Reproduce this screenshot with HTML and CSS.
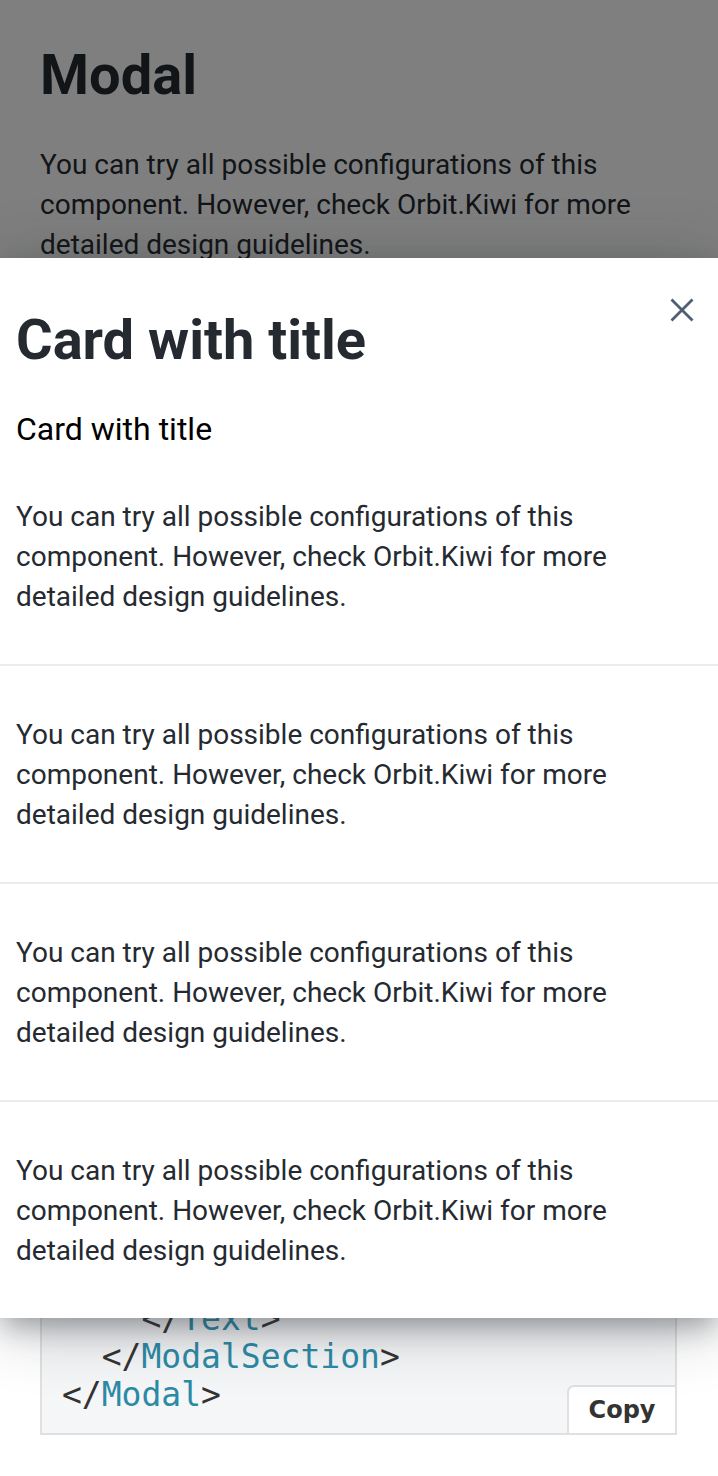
FILE: index.html
```html
<!DOCTYPE html>
<html lang="en">
<head>
<meta charset="utf-8">
<title>Modal</title>
<link rel="stylesheet" href="styles.css">
</head>
<body>
<main class="page">
  <h1 class="page-title">Modal</h1>
  <p class="page-text">You can try all possible configurations of this component. However, check Orbit.Kiwi for more detailed design guidelines.</p>
  <div class="code">
<pre class="code-pre"><span class="p">&lt;</span><span class="t">Modal</span><span class="p">&gt;</span>
  <span class="p">&lt;</span><span class="t">ModalHeader</span> title="Card with title" /<span class="p">&gt;</span>
  <span class="p">&lt;</span><span class="t">ModalSection</span><span class="p">&gt;</span>
    <span class="p">&lt;</span><span class="t">Text</span><span class="p">&gt;</span>
      You can try all possible configurations
    <span class="p">&lt;/</span><span class="t">Text</span><span class="p">&gt;</span>
  <span class="p">&lt;/</span><span class="t">ModalSection</span><span class="p">&gt;</span>
  <span class="p">&lt;</span><span class="t">ModalSection</span><span class="p">&gt;</span>
    <span class="p">&lt;</span><span class="t">Text</span><span class="p">&gt;</span>
      You can try all possible configurations
    <span class="p">&lt;/</span><span class="t">Text</span><span class="p">&gt;</span>
  <span class="p">&lt;/</span><span class="t">ModalSection</span><span class="p">&gt;</span>
  <span class="p">&lt;</span><span class="t">ModalSection</span><span class="p">&gt;</span>
    <span class="p">&lt;</span><span class="t">Text</span><span class="p">&gt;</span>
      You can try all possible configurations
    <span class="p">&lt;/</span><span class="t">Text</span><span class="p">&gt;</span>
  <span class="p">&lt;/</span><span class="t">ModalSection</span><span class="p">&gt;</span>
  <span class="p">&lt;</span><span class="t">ModalSection</span><span class="p">&gt;</span>
    <span class="p">&lt;</span><span class="t">Text</span><span class="p">&gt;</span>
      You can try all possible configurations
    <span class="p">&lt;/</span><span class="t">Text</span><span class="p">&gt;</span>
  <span class="p">&lt;/</span><span class="t">ModalSection</span><span class="p">&gt;</span>
<span class="p">&lt;/</span><span class="t">Modal</span><span class="p">&gt;</span></pre>
    <button class="copy" type="button">Copy</button>
  </div>
</main>

<div class="overlay">
  <section class="modal" role="dialog" aria-label="Card with title">
    <button class="close" type="button" aria-label="Close">
      <svg width="24" height="24" viewBox="0 0 24 24" aria-hidden="true">
        <path d="M1.5 1.5 L22.5 22.5 M22.5 1.5 L1.5 22.5" stroke="#4f5e71" stroke-width="2.8" stroke-linecap="butt" fill="none"/>
      </svg>
    </button>
    <header class="modal-header">
      <h2 class="modal-title">Card with title</h2>
      <p class="modal-desc">Card with title</p>
    </header>
    <div class="modal-section">
      <p class="modal-text">You can try all possible configurations of this component. However, check Orbit.Kiwi for more detailed design guidelines.</p>
    </div>
    <div class="modal-section">
      <p class="modal-text">You can try all possible configurations of this component. However, check Orbit.Kiwi for more detailed design guidelines.</p>
    </div>
    <div class="modal-section">
      <p class="modal-text">You can try all possible configurations of this component. However, check Orbit.Kiwi for more detailed design guidelines.</p>
    </div>
    <div class="modal-section">
      <p class="modal-text">You can try all possible configurations of this component. However, check Orbit.Kiwi for more detailed design guidelines.</p>
    </div>
  </section>
</div>
</body>
</html>
```

FILE: styles.css
```css
html, body {
  margin: 0;
  padding: 0;
  background: #ffffff;
}

body {
  font-family: Roboto, "Liberation Sans", sans-serif;
  color: #252a31;
  position: relative;
  min-height: 1476px;
}

.page {
  padding: 39px 41px 41px 40px;
}

.page-title {
  margin: 0;
  font-size: 56px;
  line-height: 72px;
  font-weight: 700;
  color: #252a31;
}

.page-text {
  margin: 34px 0 0;
  font-size: 28px;
  line-height: 40px;
}

.code {
  position: relative;
  margin-top: 254px;
}

.code-pre {
  margin: 0;
  padding: 19px 20px;
  border: 2px solid #e0e0e0;
  background: #f5f6f7;
  font-family: "DejaVu Sans Mono", "Liberation Mono", monospace;
  font-size: 33px;
  line-height: 38px;
  color: #333333;
  white-space: pre;
  overflow: hidden;
}

.code-pre .p {
  color: #333333;
}

.code-pre .t {
  color: #2c8aa6;
}

.copy {
  position: absolute;
  right: 0;
  bottom: 0;
  width: 110px;
  height: 50px;
  padding: 0;
  background: #ffffff;
  border: 2px solid #e0e0e0;
  border-top-left-radius: 7px;
  font-family: "DejaVu Sans", "Liberation Sans", sans-serif;
  font-weight: 700;
  font-size: 24px;
  color: #333333;
}

.overlay {
  position: absolute;
  top: 0;
  left: 0;
  right: 0;
  height: 1318px;
  background: rgba(0, 0, 0, 0.5);
  display: flex;
  flex-direction: column;
  justify-content: flex-end;
}

.modal {
  position: relative;
  background: #ffffff;
  box-shadow: 0 12px 24px -4px rgba(37, 42, 49, 0.32), 0 8px 60px 0 rgba(37, 42, 49, 0.32);
}

.close {
  position: absolute;
  top: 28px;
  right: 12px;
  width: 48px;
  height: 48px;
  padding: 0;
  border: 0;
  background: transparent;
  display: flex;
  align-items: center;
  justify-content: center;
}

.modal-header {
  padding: 50px 16px 0;
}

.modal-title {
  margin: 0;
  font-size: 56px;
  line-height: 64px;
  font-weight: 700;
  color: #252a31;
}

.modal-desc {
  margin: 37px 0 0;
  font-size: 32px;
  line-height: 40px;
  color: #000000;
}

.modal-section {
  padding: 49px 16px 47px;
}

.modal-header + .modal-section {
  padding-top: 48px;
}

.modal-section + .modal-section {
  border-top: 2px solid #e8edf1;
}

.modal-text {
  margin: 0;
  max-width: 640px;
  font-size: 28px;
  line-height: 40px;
  color: #252a31;
}
```
